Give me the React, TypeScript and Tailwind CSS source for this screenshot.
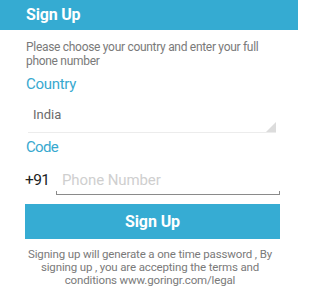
import React from "react";

export default function App() {
  return (
    <div className="w-[300px] h-[295px] bg-white overflow-hidden" style={{ fontFamily: "Roboto, 'Noto Sans', sans-serif" }}>
      <div className="w-[298px] h-[30px] bg-[#35abd2] flex items-center pl-[26px]">
        <span className="text-white font-bold text-[16px] tracking-[-0.2px] leading-none">Sign Up</span>
      </div>
      <div className="pl-[26px] pr-[20px]">
        <p className="mt-[10px] text-[12px] tracking-[-0.3px] leading-[14px] text-[#7a7a7a] whitespace-nowrap">
          Please choose your country and enter your full
          <br />
          phone number
        </p>
        <div className="mt-[7px] text-[15px] tracking-[-0.3px] leading-[18px] text-[#38a9cf]">Country</div>
        <div className="relative mt-[6px] ml-[2px] w-[248px] h-[34px] border-b border-[#ececec]">
          <span className="absolute left-[5px] top-[8px] text-[13px] leading-[15px] text-[#6b6b6b]">India</span>
          <svg className="absolute right-0 bottom-0" width="10" height="10" viewBox="0 0 10 10">
            <polygon points="10,0 10,10 0,10" fill="#dcdcdc" />
          </svg>
        </div>
        <div className="mt-[5px] text-[15px] tracking-[-0.7px] leading-[18px] text-[#38a9cf]">Code</div>
        <div className="mt-[13px] flex items-end">
          <span className="w-[31px] -ml-[1px] text-[15.5px] tracking-[-0.6px] leading-[20px] text-[#222] pb-[5px]">+91</span>
          <div className="relative w-[224px] h-[26px] border-b border-[#8a8a8a]">
            <div className="absolute left-0 bottom-0 w-px h-[3px] bg-[#8a8a8a]" />
            <div className="absolute right-0 bottom-0 w-px h-[3px] bg-[#8a8a8a]" />
            <span className="absolute left-[6px] top-[2px] text-[15px] tracking-[-0.1px] leading-[18px] text-[#cfcfcf]">Phone Number</span>
          </div>
        </div>
        <button className="mt-[9px] w-[255px] h-[35px] -ml-[1px] bg-[#36acd3] text-white font-bold text-[16px] tracking-[-0.1px] flex items-center justify-center">
          Sign Up
        </button>
        <p className="mt-[9px] -ml-[26px] w-[300px] text-center text-[11.5px] tracking-[-0.15px] leading-[13px] text-[#7a7a7a] whitespace-nowrap">
          Signing up will generate a one time password , By
          <br />
          signing up , you are accepting the terms and
          <br />
          conditions www.goringr.com/legal
        </p>
      </div>
    </div>
  );
}
